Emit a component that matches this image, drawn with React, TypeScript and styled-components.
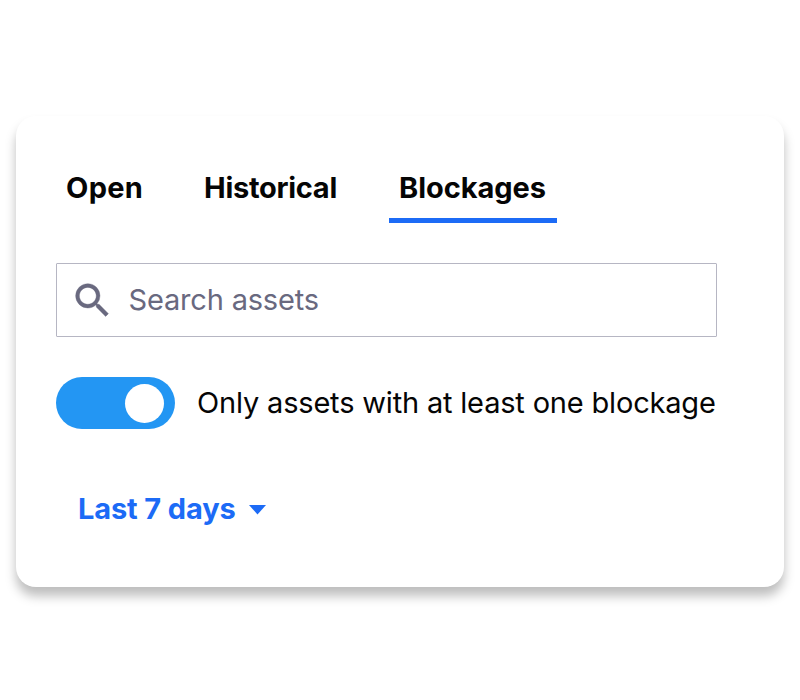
import React from 'react';
import styled, { createGlobalStyle } from 'styled-components';

const GlobalStyle = createGlobalStyle`
  * { box-sizing: border-box; }
  body {
    margin: 0;
    background: #fff;
    color: #050505;
    font-family: Inter, 'Liberation Sans', sans-serif;
  }
`;

const Page = styled.main`
  height: 700px;
  padding: 116px 16px 0;
  overflow: hidden;
`;

const Card = styled.section`
  height: 471px;
  padding: 40px 67px 0 40px;
  border-radius: 20px;
  background: #fff;
  box-shadow: 0 9px 11px rgba(0, 0, 0, 0.26);
`;

const Tabs = styled.nav`
  display: flex;
  height: 67px;
`;

const Tab = styled.button<{ $width: number; $gap: number; $spacing: number; $active?: boolean }>`
  width: ${p => p.$width}px;
  height: 67px;
  margin: 0 ${p => p.$gap}px 0 0;
  padding: 1px 0 0 10px;
  border: 0;
  border-bottom: 5px solid ${p => (p.$active ? '#1c6bf6' : 'transparent')};
  background: none;
  color: inherit;
  font: 700 29px/61px Inter, 'Liberation Sans', sans-serif;
  letter-spacing: ${p => p.$spacing}px;
  text-align: left;
  white-space: nowrap;
`;

const SearchField = styled.label`
  display: flex;
  align-items: center;
  width: 661px;
  height: 74px;
  margin-top: 40px;
  padding-left: 13px;
  border: 1px solid #b6b6c3;
  border-radius: 1px;
`;

const SearchIcon = styled.svg`
  width: 45px;
  height: 45px;
  flex: none;
  fill: #69697f;
  stroke: #69697f;
  stroke-width: 0.2;
`;

const SearchInput = styled.input`
  flex: 1;
  height: 60px;
  margin-left: 13.5px;
  padding: 0;
  border: 0;
  outline: 0;
  background: transparent;
  font: 400 29px/60px Inter, 'Liberation Sans', sans-serif;
  letter-spacing: -0.18px;
  &::placeholder { color: #69697f; opacity: 1; }
`;

const FilterRow = styled.div`
  display: flex;
  align-items: center;
  height: 52px;
  margin-top: 40px;
`;

const Switch = styled.button`
  display: flex;
  align-items: center;
  justify-content: flex-end;
  flex: none;
  width: 119px;
  height: 52px;
  padding: 0 11px 0 0;
  border: 0;
  border-radius: 26px;
  background: #2396f3;
`;

const Thumb = styled.span`
  width: 39px;
  height: 39px;
  border-radius: 50%;
  background: #fff;
`;

const FilterLabel = styled.span`
  margin-left: 22px;
  font-size: 29px;
  line-height: 52px;
  letter-spacing: -0.18px;
  white-space: nowrap;
`;

const Period = styled.button`
  display: flex;
  align-items: center;
  height: 48px;
  margin: 56px 0 0 22px;
  padding: 0;
  border: 0;
  background: none;
  color: #1c6bf6;
  font: 700 29px/48px Inter, 'Liberation Sans', sans-serif;
  letter-spacing: -0.12px;
  white-space: nowrap;
`;

const PeriodText = styled.span`
  width: 171px;
  text-align: left;
`;

const Caret = styled.svg`
  width: 17px;
  height: 10px;
  margin-top: 2px;
  flex: none;
  fill: currentColor;
`;

export default function App() {
  return (
    <>
      <GlobalStyle />
      <Page>
        <Card>
          <Tabs>
            <Tab $width={97} $gap={41} $spacing={0.3}>Open</Tab>
            <Tab $width={153} $gap={42} $spacing={-0.28}>Historical</Tab>
            <Tab $width={168} $gap={0} $spacing={-0.05} $active>Blockages</Tab>
          </Tabs>
          <SearchField>
            <SearchIcon viewBox="0 0 24 24">
              <path d="M15.5 14h-.79l-.28-.27A6.471 6.471 0 0 0 16 9.5 6.5 6.5 0 1 0 9.5 16c1.61 0 3.09-.59 4.23-1.57l.27.28v.79l5 4.99L20.49 19l-4.99-5zm-6 0C7.01 14 5 11.99 5 9.5S7.01 5 9.5 5 14 7.01 14 9.5 11.99 14 9.5 14z" />
            </SearchIcon>
            <SearchInput placeholder="Search assets" />
          </SearchField>
          <FilterRow>
            <Switch role="switch" aria-checked="true"><Thumb /></Switch>
            <FilterLabel>Only assets with at least one blockage</FilterLabel>
          </FilterRow>
          <Period>
            <PeriodText>Last 7 days</PeriodText>
            <Caret viewBox="0 0 17 10"><path d="M0 0h17L8.5 9.5z" /></Caret>
          </Period>
        </Card>
      </Page>
    </>
  );
}
